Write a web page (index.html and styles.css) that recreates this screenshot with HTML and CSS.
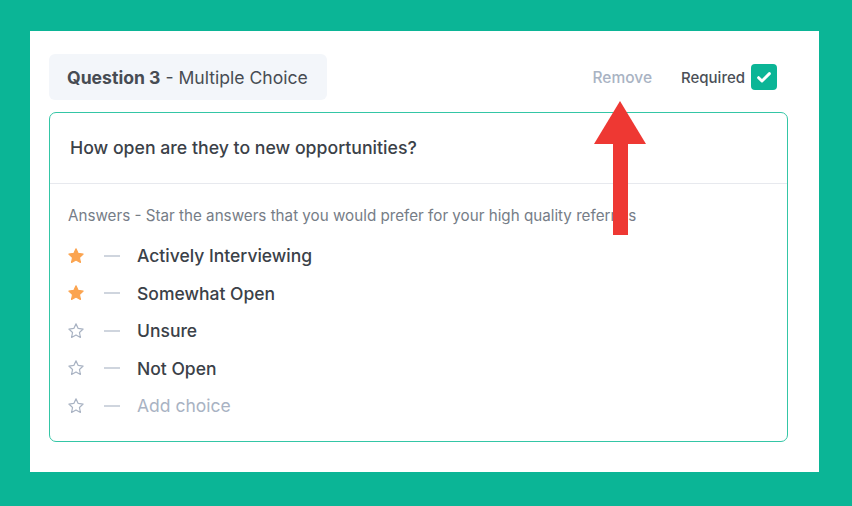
FILE: index.html
```html
<!DOCTYPE html>
<html lang="en">
<head>
  <meta charset="UTF-8" />
  <title>Question editor</title>
  <link rel="stylesheet" href="styles.css">
</head>
<body>
  <div class="panel">
    <div class="top">
      <div class="badge"><b>Question 3</b>&nbsp;- Multiple Choice</div>
      <div class="actions">
        <span class="remove">Remove</span>
        <span class="required">Required</span>
        <span class="check">
          <svg width="18" height="18" viewBox="0 0 16 16"><path d="M3.2 8.6l3 3L12.8 5" fill="none" stroke="#fff" stroke-width="2.6" stroke-linecap="round" stroke-linejoin="round"/></svg>
        </span>
      </div>
    </div>
    <div class="card">
      <div class="question">How open are they to new opportunities?</div>
      <div class="answers">
        <div class="hint">Answers - Star the answers that you would prefer for your high quality referrals</div>
        <div class="choice">
          <svg class="star on" viewBox="0 0 24 24"><path d="M12 2.5l2.9 6.1 6.6.8-4.9 4.6 1.3 6.6L12 17.3l-5.9 3.3 1.3-6.6-4.9-4.6 6.6-.8z"/></svg>
          <span class="dash"></span><span>Actively Interviewing</span>
        </div>
        <div class="choice">
          <svg class="star on" viewBox="0 0 24 24"><path d="M12 2.5l2.9 6.1 6.6.8-4.9 4.6 1.3 6.6L12 17.3l-5.9 3.3 1.3-6.6-4.9-4.6 6.6-.8z"/></svg>
          <span class="dash"></span><span>Somewhat Open</span>
        </div>
        <div class="choice">
          <svg class="star" viewBox="0 0 24 24"><path d="M12 2.5l2.9 6.1 6.6.8-4.9 4.6 1.3 6.6L12 17.3l-5.9 3.3 1.3-6.6-4.9-4.6 6.6-.8z"/></svg>
          <span class="dash"></span><span>Unsure</span>
        </div>
        <div class="choice">
          <svg class="star" viewBox="0 0 24 24"><path d="M12 2.5l2.9 6.1 6.6.8-4.9 4.6 1.3 6.6L12 17.3l-5.9 3.3 1.3-6.6-4.9-4.6 6.6-.8z"/></svg>
          <span class="dash"></span><span>Not Open</span>
        </div>
        <div class="choice add">
          <svg class="star" viewBox="0 0 24 24"><path d="M12 2.5l2.9 6.1 6.6.8-4.9 4.6 1.3 6.6L12 17.3l-5.9 3.3 1.3-6.6-4.9-4.6 6.6-.8z"/></svg>
          <span class="dash"></span><span>Add choice</span>
        </div>
      </div>
    </div>
    <div class="arrow"></div>
  </div>
</body>
</html>
```

FILE: styles.css
```css
* { box-sizing: border-box; }
body {
  margin: 0;
  background: #0bb596;
  font-family: Inter, "Noto Sans", sans-serif;
  color: #3b4148;
  padding: 31px 33px 34px 30px;
}
.panel {
  position: relative;
  background: #fff;
  height: 441px;
  padding: 23px 31px 0 19px;
}
.top {
  display: flex;
  justify-content: space-between;
  align-items: center;
  margin-bottom: 12px;
}
.badge {
  background: #f3f6fa;
  border-radius: 6px;
  width: 278px;
  height: 46px;
  padding-left: 18px;
  display: flex;
  align-items: center;
  font-size: 17.6px;
  color: #474c53;
}
.badge b { font-weight: 700; }
.actions {
  display: flex;
  align-items: center;
  font-size: 15px;
  font-weight: 500;
  padding-right: 11px;
}
.remove { color: #a9b3c3; margin-right: 29px; font-size: 15.5px; }
.required { color: #4a4f57; margin-right: 6px; }
.check {
  width: 26px;
  height: 26px;
  border-radius: 4px;
  background: #0bb596;
  display: flex;
  align-items: center;
  justify-content: center;
}
.card {
  border: 1px solid #34c6a6;
  border-radius: 7px;
  height: 330px;
}
.question {
  font-size: 17.7px;
  font-weight: 500;
  padding: 24px 20px 0;
  height: 71px;
  border-bottom: 1px solid #e7e9ee;
}
.answers { padding: 22px 18px 0; }
.hint {
  font-size: 15.2px;
  color: #767d87;
  margin-bottom: 12px;
}
.choice {
  display: flex;
  align-items: center;
  height: 37.5px;
  font-size: 17.5px;
  font-weight: 500;
}
.star {
  width: 18px;
  height: 18px;
  margin-left: -1px;
  fill: none;
  stroke: #a9b3c3;
  stroke-width: 1.6;
  stroke-linejoin: round;
}
.star.on { fill: #fba450; stroke: #fba450; }
.dash {
  width: 16px;
  height: 2px;
  background: #cfd5de;
  margin: 0 17px 0 19px;
}
.add { color: #a9b3c3; font-weight: 400; }
.arrow {
  position: absolute;
  left: 583px;
  top: 70px;
  width: 15px;
  height: 134px;
}
.arrow::before {
  content: "";
  position: absolute;
  left: -19px;
  top: 0;
  border-left: 26px solid transparent;
  border-right: 26px solid transparent;
  border-bottom: 43px solid #ee3833;
}
.arrow::after {
  content: "";
  position: absolute;
  left: 0;
  top: 42px;
  width: 15px;
  height: 92px;
  background: #ee3833;
}
```
